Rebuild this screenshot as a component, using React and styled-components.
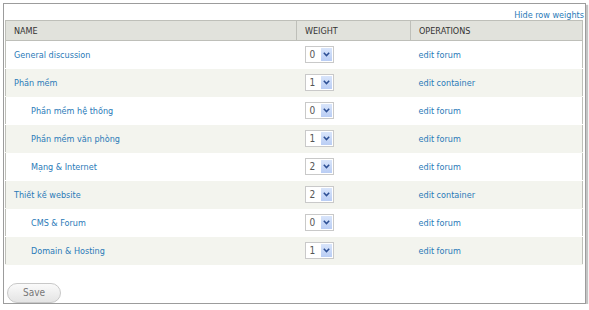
import React from "react";
import styled, { createGlobalStyle } from "styled-components";

const Global = createGlobalStyle`
  html, body { margin: 0; padding: 0; background: #fff; }
  body { font-family: "DejaVu Sans Condensed", "DejaVu Sans", Verdana, sans-serif; }
`;

const Frame = styled.div`
  margin: 3px 0 0 3px;
  width: 583px;
  height: 301px;
  border: 1px solid #9c9c9c;
  box-shadow: 2px 2px 1px #c4c4c4;
  padding: 0 2px 0 1px;
  box-sizing: border-box;
  display: flex;
  flex-direction: column;
`;

const TopBar = styled.div`
  height: 16px;
  display: flex;
  justify-content: flex-end;
  align-items: flex-end;
  margin-right: -1px;
`;

const Link = styled.a`
  color: #2a7ab8;
  text-decoration: none;
  font-size: 9px;
  cursor: pointer;
`;

const Table = styled.table`
  width: 578px;
  border-collapse: collapse;
  border: 1px solid #bebfb9;
  font-size: 9px;
`;

const Th = styled.th`
  background: #e1e2dc;
  color: #333;
  text-align: left;
  font-weight: normal;
  text-transform: uppercase;
  height: 20px;
  padding: 0 8px;
  border-left: 1px solid #bebfb9;
  border-bottom: 1px solid #bebfb9;
  width: ${(p) => p.$w}px;
  &:first-child { border-left: none; }
  box-sizing: border-box;
`;

const Tr = styled.tr`
  background: ${(p) => (p.$odd ? "#f3f4ee" : "#fff")};
  height: 28px;
`;

const Td = styled.td`
  padding: 0 8px 0 ${(p) => (p.$indent ? 25 : 8)}px;
  vertical-align: middle;
  border-bottom: 1px solid ${(p) => (p.$odd ? "#f3f4ee" : "#fff")};
`;

const Select = styled.div`
  width: 29px;
  height: 17px;
  border: 1px solid #c9c9c9;
  box-sizing: border-box;
  background: #fff;
  display: flex;
  align-items: center;
  justify-content: space-between;
  padding: 1px 1px 1px 4px;
  color: #555;
  font-size: 10px;
`;

const Arrow = styled.span`
  width: 11px;
  height: 13px;
  background: linear-gradient(#d9e5fb, #b9cdf4);
  display: flex;
  align-items: center;
  justify-content: center;
`;

const Footer = styled.div`
  padding: 16px 0 0 2px;
`;

const SaveButton = styled.button`
  width: 54px;
  height: 20px;
  border: 1px solid #c8c8c8;
  border-radius: 10px;
  background: linear-gradient(#fafafa, #e4e4e4);
  color: #777;
  font-family: "DejaVu Sans Condensed", "DejaVu Sans", Verdana, sans-serif;
  font-size: 10px;
  padding: 0;
`;

const rows = [
  { name: "General discussion", w: 0, op: "edit forum" },
  { name: "Phần mềm", w: 1, op: "edit container" },
  { name: "Phần mềm hệ thống", w: 0, op: "edit forum", indent: true },
  { name: "Phần mềm văn phòng", w: 1, op: "edit forum", indent: true },
  { name: "Mạng & Internet", w: 2, op: "edit forum", indent: true },
  { name: "Thiết kế website", w: 2, op: "edit container" },
  { name: "CMS & Forum", w: 0, op: "edit forum", indent: true },
  { name: "Domain & Hosting", w: 1, op: "edit forum", indent: true },
];

const Chevron = () => (
  <svg width="7" height="5" viewBox="0 0 7 5">
    <path d="M0.8 0.8 L3.5 3.6 L6.2 0.8" fill="none" stroke="#2d4f94" strokeWidth="1.5" />
  </svg>
);

export default function App() {
  return (
    <>
      <Global />
      <Frame>
        <TopBar>
          <Link>Hide row weights</Link>
        </TopBar>
        <Table>
          <thead>
            <tr>
              <Th $w={291}>Name</Th>
              <Th $w={114}>Weight</Th>
              <Th>Operations</Th>
            </tr>
          </thead>
          <tbody>
            {rows.map((r, i) => (
              <Tr key={i} $odd={i % 2 === 1}>
                <Td $indent={r.indent} $odd={i % 2 === 1}>
                  <Link>{r.name}</Link>
                </Td>
                <Td $odd={i % 2 === 1}>
                  <Select>
                    {r.w}
                    <Arrow>
                      <Chevron />
                    </Arrow>
                  </Select>
                </Td>
                <Td $odd={i % 2 === 1}>
                  <Link>{r.op}</Link>
                </Td>
              </Tr>
            ))}
          </tbody>
        </Table>
        <Footer>
          <SaveButton>Save</SaveButton>
        </Footer>
      </Frame>
    </>
  );
}
